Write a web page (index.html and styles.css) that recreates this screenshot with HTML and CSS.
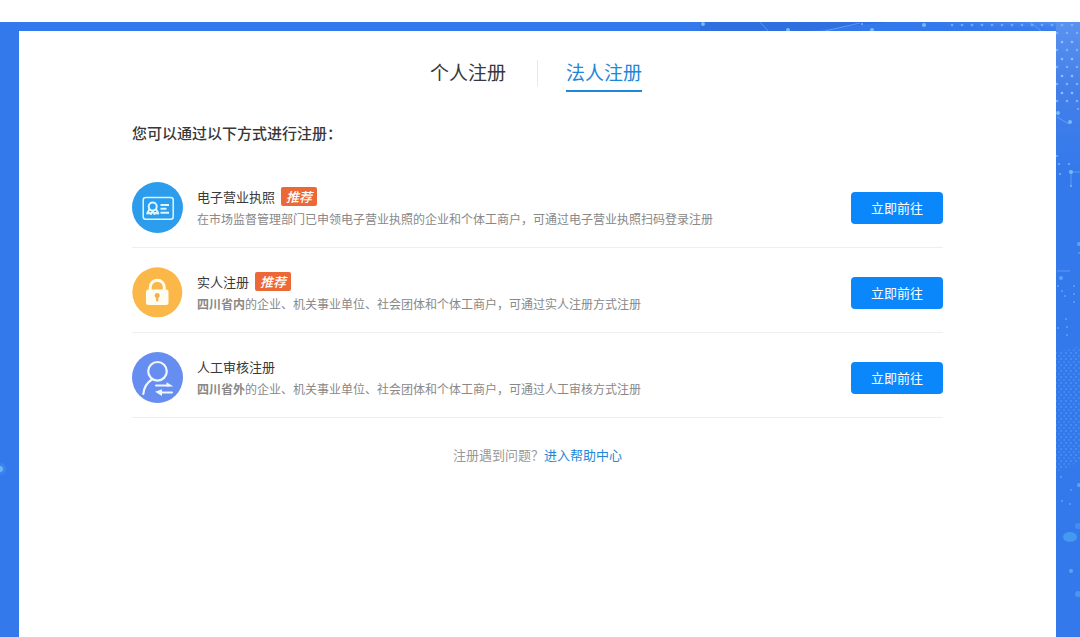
FILE: index.html
```html
<!DOCTYPE html>
<html lang="zh-CN">
<head>
<meta charset="UTF-8">
<meta name="viewport" content="width=device-width, initial-scale=1">
<title>法人注册</title>
<link rel="stylesheet" href="styles.css">
</head>
<body>
<div class="topbar"></div>
<div class="stage">
  <svg class="backdrop backdrop-right" width="380" height="615" viewBox="0 0 380 615" aria-hidden="true">
    <defs>
      <linearGradient id="glow" x1="1" y1="0" x2="0.3" y2="0.3">
        <stop offset="0" stop-color="#5b96f2"/>
        <stop offset="1" stop-color="#3479ec" stop-opacity="0"/>
      </linearGradient>
      <linearGradient id="side" x1="0" y1="0" x2="0" y2="1">
        <stop offset="0" stop-color="#5a92f0"/>
        <stop offset=".45" stop-color="#437fe9"/>
        <stop offset="1" stop-color="#3479ec"/>
      </linearGradient>
      <pattern id="dots" width="10" height="17" patternUnits="userSpaceOnUse">
        <circle cx="2" cy="3" r="1.3" fill="#8dbdfa"/>
        <circle cx="7" cy="11" r="1.3" fill="#79b0f8"/>
      </pattern>
      <pattern id="fine" width="5" height="6" patternUnits="userSpaceOnUse">
        <circle cx="1" cy="1" r="1" fill="#55a0f4"/>
        <circle cx="4" cy="4" r="1" fill="#4b94f2"/>
      </pattern>
    </defs>
    <path d="M0 0H190Q150 3 110 9H0Z" fill="#2f6fdf"/>
    <rect x="160" width="220" height="9" fill="url(#glow)"/>
    <rect x="356" width="24" height="150" fill="url(#side)"/>
    <rect x="250" width="130" height="9" fill="url(#dots)" opacity=".7"/>
    <rect x="356" y="8" width="24" height="76" fill="url(#dots)"/>
    <g stroke="#7eaef5" fill="none" opacity=".6">
      <path d="M60 0L68 9M125 9L160 1M330 0L341 9M357 95L369 102M371 148V164M371 150H380M357 249H370"/>
    </g>
    <g fill="#79b9f8">
      <circle cx="3" cy="2" r="2"/><circle cx="88" cy="8" r="2"/><circle cx="162" cy="2" r="1"/>
      <circle cx="172" cy="8" r="2"/><circle cx="224" cy="3" r="2"/><circle cx="358" cy="91" r="2"/>
      <circle cx="370" cy="100" r="2"/><circle cx="378" cy="87" r="1"/><circle cx="357" cy="134" r="1"/>
      <circle cx="359" cy="142" r="1"/><circle cx="369" cy="142" r="1"/><circle cx="371" cy="150" r="2"/>
      <circle cx="360" cy="152" r="1"/><circle cx="371" cy="164" r="1"/>
    </g>
    <g fill="#5ba3f5">
      <circle cx="379" cy="222" r="2"/><circle cx="379" cy="231" r="1"/><circle cx="361" cy="256" r="2"/>
      <circle cx="358" cy="264" r="1"/><circle cx="362" cy="269" r="1"/><circle cx="365" cy="274" r="1"/>
      <circle cx="374" cy="264" r="1"/><circle cx="374" cy="272" r="1"/><circle cx="374" cy="280" r="1"/>
      <circle cx="366" cy="297" r="1"/><circle cx="367" cy="305" r="1"/><circle cx="367" cy="313" r="1"/>
      <circle cx="358" cy="306" r="1"/><circle cx="361" cy="455" r="1"/><circle cx="371" cy="468" r="1"/>
      <circle cx="362" cy="479" r="1"/><circle cx="370" cy="482" r="1"/><circle cx="379" cy="463" r="2"/>
      <circle cx="371" cy="549" r="2"/>
    </g>
    <path d="M356 330L380 324V440L356 450Z" fill="url(#fine)" opacity=".65"/>
    <ellipse cx="370" cy="515" rx="7" ry="5" fill="#439af0"/>
    <circle cx="378" cy="504" r="3" fill="#438df0"/>
    <circle cx="378" cy="572" r="3" fill="#4c94f2"/>
  </svg>
  <svg class="backdrop backdrop-left" width="19" height="615" viewBox="0 0 19 615" aria-hidden="true">
    <circle cx="0" cy="447" r="6" fill="#438ff2" opacity=".5"/>
    <circle cx="0" cy="447" r="3" fill="#69b5fa"/>
  </svg>
  <main class="card">
    <nav class="tabs">
      <a class="tab" href="#personal">个人注册</a>
      <span class="divider"></span>
      <a class="tab tab-active" href="#legal" aria-current="page">法人注册</a>
    </nav>
    <h1 class="heading">您可以通过以下方式进行注册：</h1>
    <ul class="methods">
      <li class="method">
        <svg class="icon" viewBox="0 0 51 51" aria-hidden="true">
          <circle cx="25.5" cy="25.5" r="25.5" fill="#2c9cec"/>
          <g fill="none" stroke="#dcf6ff" stroke-width="1.5" stroke-linejoin="round">
            <rect x="11.2" y="15.5" width="30" height="21.8" rx="2.5"/>
            <circle cx="20.7" cy="24.6" r="4" stroke-width="2"/>
            <path d="M17.5 27L15.2 31.4L18 31L19.1 32L20.7 29L22.4 32L23.6 31L26.3 31.4L24 27" stroke-width="2"/>
            <path d="M28.5 23H37M28.5 26.8H34.5M28.5 30.8H37" stroke-width="1.9"/>
          </g>
        </svg>
        <div class="info">
          <h2 class="title">电子营业执照<em class="badge">推荐</em></h2>
          <p class="desc">在市场监督管理部门已申领电子营业执照的企业和个体工商户，可通过电子营业执照扫码登录注册</p>
        </div>
        <button class="go" type="button">立即前往</button>
      </li>
      <li class="method">
        <svg class="icon" viewBox="0 0 51 51" aria-hidden="true">
          <circle cx="25.3" cy="25.3" r="25" fill="#fbb848"/>
          <rect x="14" y="22.5" width="22.5" height="15.5" rx="2.5" fill="#fffdf1"/>
          <path d="M18.3 24V20.2A7 7 0 0 1 32.3 20.2V24" fill="none" stroke="#fffdf1" stroke-width="3"/>
          <circle cx="25.2" cy="28.6" r="2.5" fill="#f5b04b"/>
          <path d="M25.2 28V33.5" stroke="#f5b04b" stroke-width="2.2" stroke-linecap="round"/>
        </svg>
        <div class="info">
          <h2 class="title">实人注册<em class="badge">推荐</em></h2>
          <p class="desc"><b>四川省内</b>的企业、机关事业单位、社会团体和个体工商户，可通过实人注册方式注册</p>
        </div>
        <button class="go" type="button">立即前往</button>
      </li>
      <li class="method">
        <svg class="icon" viewBox="0 0 51 51" aria-hidden="true">
          <circle cx="25.5" cy="25.5" r="25.5" fill="#668df0"/>
          <g fill="none" stroke="#f0f6ff" stroke-width="2.2" stroke-linecap="round">
            <circle cx="25.5" cy="19.3" r="9.3"/>
            <path d="M20 27.5C15 30.5 12 35.5 11.3 42"/>
            <path d="M24 33.6H37M28 40.5H40" stroke-width="2"/>
          </g>
          <path d="M34.5 30.2L41.5 34.6H34.5ZM30 37.2V44L23 39.7Z" fill="#f0f6ff"/>
        </svg>
        <div class="info">
          <h2 class="title">人工审核注册</h2>
          <p class="desc"><b>四川省外</b>的企业、机关事业单位、社会团体和个体工商户，可通过人工审核方式注册</p>
        </div>
        <button class="go" type="button">立即前往</button>
      </li>
    </ul>
    <p class="help">注册遇到问题？<a class="help-link" href="#help">进入帮助中心</a></p>
  </main>
</div>
</body>
</html>
```
FILE: styles.css
```css
* {
  box-sizing: border-box;
  margin: 0;
  padding: 0;
}

body {
  min-height: 100vh;
  display: flex;
  flex-direction: column;
  background: #fff;
  color: #383838;
  font-family: "Noto Sans CJK SC", "Noto Sans", sans-serif;
}

.topbar {
  height: 22px;
}

.stage {
  position: relative;
  flex: 1;
  display: flex;
  overflow: hidden;
  padding: 9px 24px 0 19px;
  background: #3479ec;
}

.backdrop {
  position: absolute;
  top: 0;
}

.backdrop-right {
  right: 0;
}

.backdrop-left {
  left: 0;
}

.card {
  position: relative;
  flex: 1;
  padding: 27px 113px 40px;
  background: #fff;
}

.tabs {
  display: flex;
  justify-content: center;
  align-items: flex-start;
  gap: 28px;
  padding-right: 3px;
}

.tab {
  height: 34px;
  color: #383838;
  font-size: 19px;
  line-height: 28px;
  text-decoration: none;
}

.tab-active {
  color: #1e88d8;
  border-bottom: 2px solid #1e88d8;
}

.divider {
  width: 1px;
  height: 26px;
  margin: 2px 0 0 3px;
  background: #e8e8e8;
}

.heading {
  margin-top: 29px;
  font-size: 15px;
  font-weight: 500;
  line-height: 24px;
}

.methods {
  margin-top: 18px;
  list-style: none;
}

.method {
  display: flex;
  align-items: center;
  gap: 14px;
  padding: 19px 0 14px;
  border-bottom: 1px solid #eee;
}

.icon {
  flex: none;
  width: 51px;
  height: 51px;
}

.info {
  flex: 1;
  min-width: 0;
}

.title {
  display: flex;
  align-items: center;
  gap: 6px;
  height: 22px;
  font-size: 13px;
  font-weight: 400;
  line-height: 22px;
}

.badge {
  padding: 0 5px;
  border-radius: 2px;
  background: #ec6837;
  color: #fff;
  font-size: 13px;
  font-weight: 500;
  line-height: 19px;
}

.desc {
  color: #888;
  font-size: 12px;
  line-height: 22px;
}

.desc b {
  font-weight: 700;
}

.go {
  flex: none;
  width: 92px;
  height: 32px;
  border: 0;
  border-radius: 4px;
  background: #0a88fb;
  color: #fff;
  font-family: inherit;
  font-size: 13px;
  line-height: 30px;
  cursor: pointer;
}

.help {
  margin-top: 26px;
  color: #999;
  font-size: 13px;
  line-height: 22px;
  text-align: center;
}

.help-link {
  color: #1e88d8;
  text-decoration: none;
}
```
